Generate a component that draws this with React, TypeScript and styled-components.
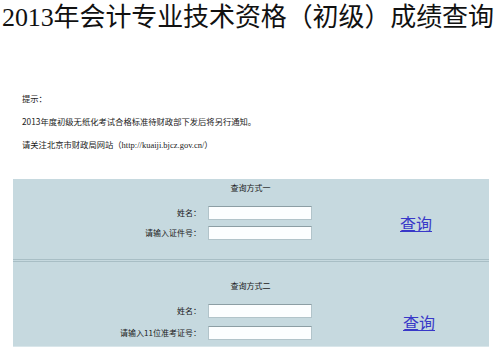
import React from "react";
import styled, { createGlobalStyle } from "styled-components";

const Global = createGlobalStyle`
  html, body { margin: 0; padding: 0; background: #ffffff; }
  body { width: 500px; height: 355px; overflow: hidden; font-family: "Noto Sans CJK SC", "Liberation Sans", sans-serif; }
`;

const Page = styled.div`
  display: flex;
  flex-direction: column;
  width: 500px;
`;

const Title = styled.h1`
  margin: 0;
  padding: 1px 0 0 2px;
  height: 36px;
  font-family: "Liberation Serif", "Noto Sans CJK SC", serif;
  font-weight: normal;
  font-size: 26px;
  line-height: 34px;
  color: #111;
  white-space: nowrap;
  letter-spacing: -0.1px;
`;

const Hints = styled.div`
  display: flex;
  flex-direction: column;
  gap: 9px;
  padding: 54px 0 0 22px;
`;

const Hint = styled.p`
  margin: 0;
  font-size: 8.3px;
  line-height: 14px;
  color: #1a1a1a;
  white-space: nowrap;
`;

const Url = styled.span`
  font-family: "Liberation Serif", serif;
  font-size: 8.5px;
`;

const Panel = styled.div`
  margin: 27px 11px 0 13px;
  background: #c6d9df;
  display: flex;
  flex-direction: column;
  box-shadow: 0 1px 0 #d9e6ea;
`;

const Section = styled.div<{ $top: number; $bottom: number; $divider?: boolean }>`
  display: grid;
  grid-template-columns: 188px 104px 1fr;
  column-gap: 7px;
  align-items: center;
  padding: ${(p) => p.$top}px 0 ${(p) => p.$bottom}px 0;
  border-bottom: ${(p) => (p.$divider ? "3px double #a8bec5" : "none")};
`;

const SectionTitle = styled.div<{ $gap: number }>`
  grid-column: 1 / -1;
  text-align: center;
  font-size: 8px;
  line-height: 14px;
  color: #1a1a1a;
  margin-bottom: ${(p) => p.$gap}px;
  padding-right: 1px;
`;

const Label = styled.label<{ $row: number }>`
  grid-column: 1;
  grid-row: ${(p) => p.$row};
  text-align: right;
  font-size: 8px;
  line-height: 14px;
  color: #1a1a1a;
  white-space: nowrap;
`;

const Field = styled.input<{ $row: number; $mt: number }>`
  grid-column: 2;
  grid-row: ${(p) => p.$row};
  margin-top: ${(p) => p.$mt}px;
  box-sizing: border-box;
  width: 104px;
  height: 14px;
  padding: 0 2px;
  background: #fcfeff;
  border: 1px solid #b2c4ca;
  border-top-color: #8c9ea4;
  outline: none;
  font-size: 8px;
`;

const QueryLink = styled.a<{ $offset: number }>`
  grid-column: 3;
  grid-row: 2 / span 2;
  justify-self: start;
  padding-left: ${(p) => p.$offset}px;
  font-size: 16px;
  line-height: 18px;
  color: #3838c8;
  text-decoration: underline;
  cursor: pointer;
`;

function QuerySection(props: {
  title: string;
  second: string;
  top: number;
  bottom: number;
  titleGap: number;
  rowGap: number;
  linkOffset: number;
  divider?: boolean;
}) {
  return (
    <Section $top={props.top} $bottom={props.bottom} $divider={props.divider}>
      <SectionTitle $gap={props.titleGap}>{props.title}</SectionTitle>
      <Label $row={2}>姓名：</Label>
      <Field $row={2} $mt={0} type="text" />
      <Label $row={3} style={{ marginTop: props.rowGap }}>{props.second}</Label>
      <Field $row={3} $mt={props.rowGap} type="text" />
      <QueryLink $offset={props.linkOffset}>查询</QueryLink>
    </Section>
  );
}

export default function App() {
  return (
    <>
      <Global />
      <Page>
        <Title>2013年会计专业技术资格（初级）成绩查询</Title>
        <Hints>
          <Hint>提示：</Hint>
          <Hint>2013年度初级无纸化考试合格标准待财政部下发后将另行通知。</Hint>
          <Hint>
            请关注北京市财政局网站（<Url>http://kuaiji.bjcz.gov.cn/</Url>）
          </Hint>
        </Hints>
        <Panel>
          <QuerySection
            title="查询方式一"
            second="请输入证件号："
            top={2}
            bottom={19}
            titleGap={11}
            rowGap={6}
            linkOffset={81}
            divider
          />
          <QuerySection
            title="查询方式二"
            second="请输入11位准考证号："
            top={17}
            bottom={6}
            titleGap={11}
            rowGap={8}
            linkOffset={84}
          />
        </Panel>
      </Page>
    </>
  );
}
